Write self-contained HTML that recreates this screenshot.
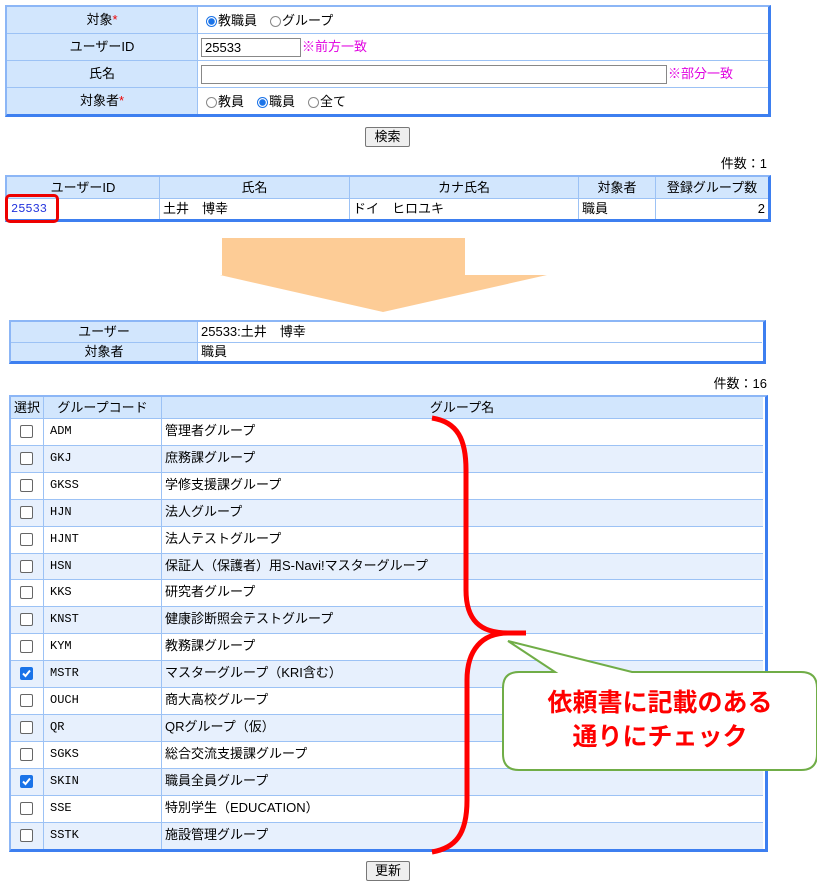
<!DOCTYPE html>
<html><head><meta charset="utf-8">
<style>
body{margin:0;width:817px;height:887px;background:#fff;position:relative;overflow:hidden;font-family:"Liberation Sans","Noto Sans CJK JP",sans-serif;font-size:13px;color:#000}
.a{position:absolute;box-sizing:border-box}
.box{border-top:2px solid #8cb6f6;border-left:2px solid #8cb6f6;border-right:3px solid #3d7ff0;border-bottom:3px solid #3d7ff0}
.lbl{background:#d2e6fd;text-align:center}
.c{position:absolute;box-sizing:border-box;line-height:20px;white-space:nowrap;overflow:hidden}
.hl{position:absolute;height:1px;background:#9cc2f5}
.vl{position:absolute;width:1px;background:#9cc2f5}
.rad{display:inline-block;width:11px;height:11px;border:1px solid #888;border-radius:50%;vertical-align:-2px;margin-right:1px;box-sizing:border-box;background:#fff}
.rad.on{border-color:#1a73e8;background:radial-gradient(circle,#1a73e8 0 3px,#fff 3.5px)}
.cb{position:absolute;left:20px;width:13px;height:13px;border:1px solid #666;border-radius:2px;box-sizing:border-box;background:#fff}
.cb.on{background:#1a73e8;border-color:#1a73e8}
.btn{position:absolute;border:1px solid #777;border-radius:2px;background:#efefef;text-align:center;line-height:17px;font-size:13px;box-sizing:border-box}
.mono{font-family:"Liberation Mono","Noto Sans CJK JP",monospace;font-size:12px}
.red{color:#e00}
.pink{color:#e000e0}
</style></head><body>

<div class="a box" style="left:5px;top:5px;width:766px;height:112px"></div>
<div class="a lbl" style="left:7px;top:7px;width:190px;height:107px"></div>
<div class="hl" style="left:7px;top:33px;width:761px"></div>
<div class="hl" style="left:7px;top:60px;width:761px"></div>
<div class="hl" style="left:7px;top:87px;width:761px"></div>
<div class="vl" style="left:197px;top:7px;height:107px"></div>
<div class="c" style="left:7px;top:10px;width:190px;text-align:center">対象<span class="red">*</span></div>
<div class="c" style="left:7px;top:37px;width:190px;text-align:center">ユーザーID</div>
<div class="c" style="left:7px;top:64px;width:190px;text-align:center">氏名</div>
<div class="c" style="left:7px;top:91px;width:190px;text-align:center">対象者<span class="red">*</span></div>
<div class="c" style="left:206px;top:11px"><span class="rad on"></span>教職員　<span class="rad"></span>グループ</div>
<div class="a" style="left:201px;top:38px;width:100px;height:19px;border:1px solid #888;padding-left:3px;line-height:17px">25533</div>
<div class="c pink" style="left:302px;top:37px">※前方一致</div>
<div class="a" style="left:201px;top:65px;width:466px;height:19px;border:1px solid #888"></div>
<div class="c pink" style="left:668px;top:64px">※部分一致</div>
<div class="c" style="left:206px;top:92px"><span class="rad"></span>教員　<span class="rad on"></span>職員　<span class="rad"></span>全て</div>

<div class="btn" style="left:365px;top:127px;width:45px;height:20px">検索</div>
<div class="c" style="left:700px;top:154px;width:67px;text-align:right">件数：1</div>

<div class="a box" style="left:5px;top:175px;width:766px;height:47px"></div>
<div class="a lbl" style="left:7px;top:177px;width:761px;height:21px"></div>
<div class="hl" style="left:7px;top:198px;width:761px"></div>
<div class="vl" style="left:159px;top:177px;height:42px"></div>
<div class="vl" style="left:349px;top:177px;height:42px"></div>
<div class="vl" style="left:578px;top:177px;height:42px"></div>
<div class="vl" style="left:655px;top:177px;height:42px"></div>
<div class="c" style="left:7px;top:178px;width:152px;text-align:center">ユーザーID</div>
<div class="c" style="left:160px;top:178px;width:189px;text-align:center">氏名</div>
<div class="c" style="left:350px;top:178px;width:228px;text-align:center">カナ氏名</div>
<div class="c" style="left:579px;top:178px;width:76px;text-align:center">対象者</div>
<div class="c" style="left:656px;top:178px;width:112px;text-align:center">登録グループ数</div>
<div class="c mono" style="left:11px;top:199px;color:#2233dd">25533</div>
<div class="c" style="left:163px;top:199px">土井　博幸</div>
<div class="c" style="left:353px;top:199px">ドイ　ヒロユキ</div>
<div class="c" style="left:582px;top:199px">職員</div>
<div class="c" style="left:656px;top:199px;width:109px;text-align:right">2</div>
<div class="a" style="left:5px;top:194px;width:54px;height:29px;border:3px solid #ee0000;border-radius:5px"></div>

<svg class="a" style="left:0;top:0" width="817" height="887">
<polygon points="222,238 465,238 465,275 547,275 383,312 220,275 222,275" fill="#fdcc96"/>
</svg>

<div class="a box" style="left:9px;top:320px;width:757px;height:44px"></div>
<div class="a lbl" style="left:11px;top:322px;width:186px;height:39px"></div>
<div class="hl" style="left:11px;top:342px;width:751px"></div>
<div class="vl" style="left:197px;top:322px;height:39px"></div>
<div class="c" style="left:11px;top:322px;width:186px;text-align:center">ユーザー</div>
<div class="c" style="left:11px;top:342px;width:186px;text-align:center">対象者</div>
<div class="c" style="left:201px;top:322px">25533:土井　博幸</div>
<div class="c" style="left:201px;top:342px">職員</div>

<div class="c" style="left:690px;top:374px;width:77px;text-align:right">件数：16</div>

<div class="a box" style="left:9px;top:395px;width:759px;height:457px"></div>
<div class="a lbl" style="left:11px;top:397px;width:752px;height:21px"></div>
<div id="rows"></div>
<div class="vl" style="left:43px;top:397px;height:452px"></div>
<div class="vl" style="left:161px;top:397px;height:452px"></div>
<div class="c" style="left:11px;top:398px;width:32px;text-align:center">選択</div>
<div class="c" style="left:44px;top:398px;width:117px;text-align:center">グループコード</div>
<div class="c" style="left:162px;top:398px;width:600px;text-align:center">グループ名</div>

<script>
var d=[["ADM","管理者グループ"],["GKJ","庶務課グループ"],["GKSS","学修支援課グループ"],["HJN","法人グループ"],["HJNT","法人テストグループ"],["HSN","保証人（保護者）用S-Navi!マスターグループ"],["KKS","研究者グループ"],["KNST","健康診断照会テストグループ"],["KYM","教務課グループ"],["MSTR","マスターグループ（KRI含む）",1],["OUCH","商大高校グループ"],["QR","QRグループ（仮）"],["SGKS","総合交流支援課グループ"],["SKIN","職員全員グループ",1],["SSE","特別学生（EDUCATION）"],["SSTK","施設管理グループ"]];
var h="";
for(var i=0;i<d.length;i++){var t=418+i*26.9;
h+='<div class="a" style="left:11px;top:'+t+'px;width:752px;height:27px;background:'+(i%2?'#e7f0fd':'#fff')+';border-top:1px solid #9cc2f5"></div>';
h+='<div class="cb'+(d[i][2]?' on':'')+'" style="top:'+(t+7)+'px">'+(d[i][2]?'<svg width="11" height="11" style="position:absolute;left:0;top:0"><path d="M2 5.5 L4.5 8 L9 2.5" stroke="#fff" stroke-width="2" fill="none"/></svg>':'')+'</div>';
h+='<div class="c mono" style="left:50px;top:'+(t+3)+'px">'+d[i][0]+'</div>';
h+='<div class="c" style="left:165px;top:'+(t+3)+'px">'+d[i][1]+'</div>';}
document.getElementById("rows").innerHTML=h;
</script>

<div class="btn" style="left:366px;top:861px;width:44px;height:20px">更新</div>

<svg class="a" style="left:0;top:0" width="817" height="887">
<path d="M432,418 C458,422 466,440 466,470 L466,590 C466,620 480,633 508,633 L526,633 M508,633 C482,633 467,650 467,680 L467,800 C467,835 455,848 432,852" stroke="#ff0000" stroke-width="5" fill="none"/>
<path d="M519,672 L555,672 L508,641 L632,672 L801,672 Q817,672 817,688 L817,754 Q817,770 801,770 L519,770 Q503,770 503,754 L503,688 Q503,672 519,672 Z" fill="#fff" stroke="#70ad47" stroke-width="2"/>
</svg>
<div class="c" style="left:503px;top:686px;width:314px;text-align:center;color:#f00;font-weight:bold;font-size:25px;line-height:34px">依頼書に記載のある<br>通りにチェック</div>
</body></html>
